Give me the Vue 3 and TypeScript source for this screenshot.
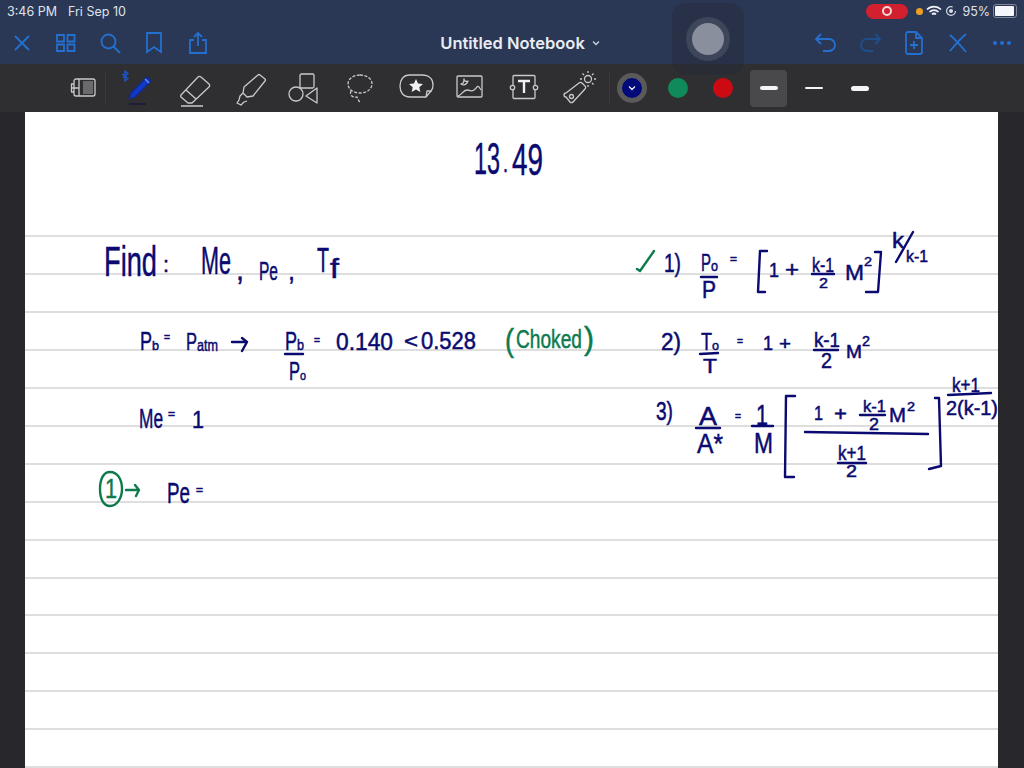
<script setup lang="ts">
interface Ink {
  t: string
  x: number
  y: number
  w: number
  s: number
  green?: boolean
}

// page handwriting, in screenshot coordinates: x, baseline, width, font size
const ink: Ink[] = [
  { t: '13', x: 474, y: 174, w: 26, s: 44 },
  { t: '.', x: 503, y: 172, w: 5, s: 26 },
  { t: '49', x: 512, y: 175, w: 31, s: 44 },
  { t: 'Find', x: 104, y: 276, w: 53, s: 42 },
  { t: ':', x: 163, y: 272, w: 6, s: 22 },
  { t: 'Me', x: 201, y: 274, w: 30, s: 38 },
  { t: ',', x: 236, y: 280, w: 8, s: 30 },
  { t: 'Pe', x: 259, y: 280, w: 19, s: 26 },
  { t: ',', x: 288, y: 280, w: 7, s: 28 },
  { t: 'T', x: 317, y: 272, w: 12, s: 36 },
  { t: 'f', x: 330, y: 278, w: 9, s: 28 },

  { t: 'P', x: 140, y: 350, w: 12, s: 26 },
  { t: 'b', x: 152, y: 350, w: 7, s: 13 },
  { t: '=', x: 164, y: 341, w: 6, s: 10 },
  { t: 'P', x: 186, y: 350, w: 11, s: 24 },
  { t: 'atm', x: 197, y: 351, w: 21, s: 17 },
  { t: 'P', x: 285, y: 350, w: 12, s: 26 },
  { t: 'b', x: 297, y: 350, w: 7, s: 15 },
  { t: 'P', x: 289, y: 380, w: 11, s: 26 },
  { t: 'o', x: 300, y: 380, w: 6, s: 13 },
  { t: '=', x: 314, y: 344, w: 6, s: 10 },
  { t: '0.140', x: 336, y: 350, w: 57, s: 24 },
  { t: '<', x: 404, y: 348, w: 14, s: 20 },
  { t: '0.528', x: 421, y: 349, w: 55, s: 23 },
  { t: '(', x: 505, y: 351, w: 9, s: 32, green: true },
  { t: 'Choked', x: 516, y: 348, w: 66, s: 26, green: true },
  { t: ')', x: 584, y: 349, w: 10, s: 32, green: true },

  { t: 'Me', x: 139, y: 428, w: 24, s: 27 },
  { t: '=', x: 168, y: 418, w: 7, s: 10 },
  { t: '1', x: 192, y: 428, w: 12, s: 24 },

  { t: '1', x: 105, y: 498, w: 12, s: 28, green: true },
  { t: 'Pe', x: 167, y: 503, w: 23, s: 30 },
  { t: '=', x: 196, y: 494, w: 7, s: 10 },

  { t: '1)', x: 664, y: 272, w: 17, s: 26 },
  { t: 'P', x: 701, y: 271, w: 10, s: 24 },
  { t: 'o', x: 711, y: 271, w: 7, s: 14 },
  { t: 'P', x: 702, y: 298, w: 14, s: 24 },
  { t: '=', x: 730, y: 263, w: 7, s: 10 },
  { t: '1', x: 769, y: 277, w: 10, s: 20 },
  { t: '+', x: 785, y: 277, w: 14, s: 22 },
  { t: 'k-1', x: 812, y: 272, w: 22, s: 20 },
  { t: '2', x: 819, y: 288, w: 9, s: 15 },
  { t: 'M', x: 845, y: 280, w: 19, s: 22 },
  { t: '2', x: 864, y: 266, w: 8, s: 13 },
  { t: 'k', x: 892, y: 248, w: 12, s: 22 },
  { t: 'k-1', x: 906, y: 262, w: 22, s: 17 },

  { t: '2)', x: 661, y: 350, w: 20, s: 24 },
  { t: 'T', x: 701, y: 350, w: 11, s: 24 },
  { t: 'o', x: 712, y: 350, w: 7, s: 13 },
  { t: 'T', x: 703, y: 373, w: 14, s: 21 },
  { t: '=', x: 737, y: 345, w: 6, s: 10 },
  { t: '1', x: 763, y: 350, w: 10, s: 20 },
  { t: '+', x: 779, y: 350, w: 12, s: 18 },
  { t: 'k-1', x: 814, y: 347, w: 26, s: 20 },
  { t: '2', x: 821, y: 368, w: 11, s: 22 },
  { t: 'M', x: 846, y: 358, w: 16, s: 18 },
  { t: '2', x: 862, y: 346, w: 8, s: 14 },

  { t: '3)', x: 656, y: 420, w: 17, s: 26 },
  { t: 'A', x: 699, y: 425, w: 18, s: 26 },
  { t: 'A*', x: 697, y: 453, w: 26, s: 28 },
  { t: '=', x: 735, y: 420, w: 6, s: 10 },
  { t: '1', x: 756, y: 425, w: 12, s: 30 },
  { t: 'M', x: 754, y: 453, w: 19, s: 30 },
  { t: '1', x: 814, y: 420, w: 9, s: 20 },
  { t: '+', x: 834, y: 421, w: 13, s: 20 },
  { t: 'k-1', x: 863, y: 412, w: 23, s: 17 },
  { t: '2', x: 869, y: 430, w: 10, s: 17 },
  { t: 'M', x: 889, y: 422, w: 17, s: 20 },
  { t: '2', x: 907, y: 411, w: 8, s: 12 },
  { t: 'k+1', x: 838, y: 460, w: 28, s: 21 },
  { t: '2', x: 846, y: 477, w: 11, s: 17 },
  { t: 'k+1', x: 952, y: 392, w: 28, s: 21 },
  { t: '2(k-1)', x: 946, y: 415, w: 52, s: 20 }
]

// fraction bars, drawn by hand in the note
const bars = [
  [285, 354, 303, 354], [701, 277, 717, 277], [812, 274, 834, 274],
  [700, 354, 718, 353], [814, 350, 838, 350], [696, 428, 720, 428],
  [752, 426, 773, 426], [860, 415, 885, 415], [805, 432, 928, 434],
  [838, 463, 866, 463], [948, 395, 991, 393]
]

const tools = ['pen', 'eraser', 'highlighter', 'shapes', 'lasso', 'sticker', 'image', 'text', 'wand']

const ctx = document.createElement('canvas').getContext('2d')!

// squeeze each token to the width it has in the note
function placeInk(item: Ink): string {
  ctx.font = `${item.s}px "Liberation Sans"`
  const sx = item.w / ctx.measureText(item.t).width
  return `translate(${item.x} ${item.y}) scale(${sx.toFixed(3)} 1)`
}
</script>

<template>
  <div class="screen">
    <header class="top">
      <div class="status">
        <div class="clock"><span>3:46 PM</span><span>Fri Sep 10</span></div>
        <div class="indicators">
          <span class="rec"><i></i></span>
          <span class="dot"></span>
          <svg class="wifi" width="16" height="12" viewBox="0 0 16 12"><path d="M1 4.500a10 10 0 0 1 14 0M3.500 7a6.500 6.500 0 0 1 9 0M6 9.400a3 3 0 0 1 4 0" fill="none" stroke="#f2f4f8" stroke-width="1.700" /></svg>
          <svg class="lock" width="12" height="12" viewBox="0 0 12 12"><circle cx="6" cy="6" r="4.400" fill="none" stroke="#d8dce4" stroke-width="1.200" stroke-dasharray="22 5" /><circle cx="6" cy="6" r="2" fill="#d8dce4" /></svg>
          <span class="pct">95%</span>
          <span class="battery"><i></i></span>
        </div>
      </div>
      <nav class="nav">
        <div class="nav-side">
          <svg width="24" height="24" viewBox="0 0 24 24"><path d="M5 5l14 14M19 5L5 19" /></svg>
          <svg width="24" height="24" viewBox="0 0 24 24"><path d="M3 4h7v6.500H3zM13.500 4h7v6.500h-7zM3 13.500h7V20H3zM13.500 13.500h7V20h-7z" /></svg>
          <svg width="24" height="24" viewBox="0 0 24 24"><circle cx="10.500" cy="10.500" r="7" /><path d="M15.500 15.500L22 22" /></svg>
          <svg width="24" height="24" viewBox="0 0 24 24"><path d="M5 2h14v19l-7-5-7 5z" /></svg>
          <svg width="24" height="24" viewBox="0 0 24 24"><path d="M8 9H4v13h16V9h-4M12 15V2M8 6l4-4 4 4" /></svg>
        </div>
        <div class="title">Untitled Notebook <svg width="8" height="6" viewBox="0 0 8 6"><path d="M1 1.500l3 3 3-3" /></svg></div>
        <div class="nav-side right">
          <svg width="24" height="24" viewBox="0 0 24 24"><path d="M7 3L2 8l5 5M2 8h13a6 6 0 0 1 6 6v0a6 6 0 0 1-6 6H9" /></svg>
          <svg class="dim" width="24" height="24" viewBox="0 0 24 24"><path d="M17 3l5 5-5 5M22 8H9a6 6 0 0 0-6 6v0a6 6 0 0 0 6 6h6" /></svg>
          <svg width="24" height="24" viewBox="0 0 24 24"><path d="M4 3a2 2 0 0 1 2-2h8l6 6v14a2 2 0 0 1-2 2H6a2 2 0 0 1-2-2zM14 1v6h6M12 10v8M8 14h8" /></svg>
          <svg width="24" height="24" viewBox="0 0 24 24"><path d="M4 4c6 5 11 11 16 17M20 3C14 8 9 14 4 20" /></svg>
          <svg width="24" height="24" viewBox="0 0 24 24"><circle cx="5" cy="12" r="2" class="fill" /><circle cx="12" cy="12" r="2" class="fill" /><circle cx="19" cy="12" r="2" class="fill" /></svg>
        </div>
      </nav>
    </header>

    <div class="toolbar">
      <svg class="split" width="26" height="22" viewBox="0 0 26 22">
        <rect x="4" y="2" width="21" height="17" rx="2" />
        <path d="M13 4l10 0 0 13-10 0z" class="hatch" />
        <path d="M4 7H1.500v8H4M1.500 11H9M9 2v17" />
      </svg>
      <span class="divider"></span>
      <div v-for="tool in tools" :key="tool" class="tool" :class="tool">
        <svg v-if="tool === 'pen'" width="46" height="40" viewBox="0 0 46 40">
          <path d="M10 8l3 2.500-3 2.500V3l3 2.500-5 4M10 8l-3-2" class="bt" />
          <path d="M14 31l2-6 16-16 4 4-16 16z" class="pen" />
          <path d="M30 11l4 4" class="pen-tip" />
          <path d="M14 36h17" class="pen-line" />
        </svg>
        <svg v-else-if="tool === 'eraser'" width="46" height="40" viewBox="0 0 46 40">
          <path d="M10 27l17-18a2 2 0 0 1 3 0l8 7a2 2 0 0 1 0 3L21 35h-4l-7-6a1.500 1.500 0 0 1 0-2zM15 22l10 9M10 38h22" />
        </svg>
        <svg v-else-if="tool === 'highlighter'" width="46" height="40" viewBox="0 0 46 40">
          <path d="M20 19l14-12a1.500 1.500 0 0 1 2 0l5 4a1.500 1.500 0 0 1 0 2L29 28l-6 1-4-4zM19 25l-3 3-1 4-2 3 4 2 3-3 3-1" />
        </svg>
        <svg v-else-if="tool === 'shapes'" width="46" height="40" viewBox="0 0 46 40">
          <rect x="20" y="6" width="14" height="14" rx="1.500" />
          <circle cx="16" cy="26" r="7" />
          <path d="M37 20v15l-11-7z" />
        </svg>
        <svg v-else-if="tool === 'lasso'" width="46" height="40" viewBox="0 0 46 40">
          <path d="M23 7c7 0 12 4 12 9s-5 9-12 9-12-4-12-9 5-9 12-9zM14 23c-2 4 2 7 6 6l3 6" stroke-dasharray="3 1.500" />
        </svg>
        <svg v-else-if="tool === 'sticker'" width="46" height="40" viewBox="0 0 46 40">
          <path d="M17 7h12c7 0 11 4 11 10 0 3-1 5-2 6l-5 6H17C10 29 7 24 7 18S10 7 17 7zM33 29l1-6h5" />
          <path d="M23 11l2 4.500 5 .500-3.700 3.200 1 4.800-4.300-2.500-4.300 2.500 1-4.800L16 16l5-.500z" class="fill" />
        </svg>
        <svg v-else-if="tool === 'image'" width="46" height="40" viewBox="0 0 46 40">
          <rect x="10" y="8" width="25" height="21" rx="1" />
          <path d="M11 28c4-1 5-6 9-6s4 2 7 0 3-5 5-3l2 3M17 11c0 3-1 5-3 5 3 2 6 0 7-3-2 1-4 0-4-2z" />
        </svg>
        <svg v-else-if="tool === 'text'" width="46" height="40" viewBox="0 0 46 40">
          <path d="M12 17V8.500a1 1 0 0 1 1-1h20a1 1 0 0 1 1 1V17M12 22v7.500a1 1 0 0 0 1 1h20a1 1 0 0 0 1-1V22" />
          <circle cx="11.500" cy="19.500" r="2.200" /><circle cx="34.500" cy="19.500" r="2.200" />
          <path d="M17 13h12M23 13v12" class="bold" />
        </svg>
        <svg v-else width="46" height="40" viewBox="0 0 46 40">
          <path d="M10 25l13-10a2 2 0 0 1 3 0l3 3a2 2 0 0 1 0 3L17 34a2 2 0 0 1-3 0l-4-5a2 2 0 0 1 0-4z" />
          <circle cx="15.500" cy="28.500" r="2" />
          <circle cx="32" cy="11" r="3.500" />
          <path d="M32 3v2M32 17v2M24 11h2M38 11h2M26.500 5.500l1.500 1.500M36 15l1.500 1.500M37.500 5.500L36 7" />
        </svg>
      </div>
      <span class="divider second"></span>
      <div class="swatch current"><span class="chip blue"><svg width="8" height="6" viewBox="0 0 8 6"><path d="M1 1.500l3 3 3-3" /></svg></span></div>
      <div class="swatch"><span class="chip green"></span></div>
      <div class="swatch"><span class="chip red"></span></div>
      <div class="stroke active"><i class="mid"></i></div>
      <div class="stroke"><i class="thin"></i></div>
      <div class="stroke"><i class="thick"></i></div>
    </div>

    <main class="desk">
      <section class="page">
        <svg class="ink" width="973" height="656" viewBox="25 112 973 656">
          <text
            v-for="(item, i) in ink"
            :key="i"
            :transform="placeInk(item)"
            :font-size="item.s"
            :class="{ green: item.green }"
          >{{ item.t }}</text>
          <line v-for="(b, i) in bars" :key="'b' + i" :x1="b[0]" :y1="b[1]" :x2="b[2]" :y2="b[3]" class="stroke-ink" />
          <!-- arrow, brackets, slash -->
          <path class="stroke-ink" d="M232 342h15l-5 9M242 338l5 4" />
          <path class="stroke-ink" d="M767 251h-7l-2 41h7M866 292h12l3-40h-6" />
          <path class="stroke-ink" d="M896 262l17-30" />
          <path class="stroke-ink" d="M795 396h-9l-1 81h9M935 398h4l2 68-12 3" />
          <path class="stroke-green" d="M637 269l3 2 14-20" />
          <path class="stroke-green" d="M110 472c-7 0-10 8-10 17s3 17 10 17 12-8 12-17-4-17-12-17zM126 490h13l-3 6M135 485l4 5" />
        </svg>
      </section>
    </main>

    <div class="assistive"><span class="ring"><i></i></span></div>
  </div>
</template>

<style scoped>
.screen {
  position: relative;
  width: 1024px;
  height: 768px;
  overflow: hidden;
  display: flex;
  flex-direction: column;
  background: #28282c;
  font-family: "Inter", "Liberation Sans", sans-serif;
}

.top {
  background: #2a3856;
}

.status {
  height: 22px;
  padding: 0 7px 0 7px;
  display: flex;
  align-items: center;
  justify-content: space-between;
  color: #dfe3ea;
  font-size: 12.500px;
}

.clock {
  display: flex;
  gap: 11px;
}

.indicators {
  display: flex;
  align-items: center;
}

.rec {
  width: 42px;
  height: 15px;
  margin-right: 8px;
  border-radius: 8px;
  background: #d2202f;
  display: flex;
  align-items: center;
  justify-content: center;
}

.rec i {
  width: 6px;
  height: 6px;
  border-radius: 50%;
  background: #d2202f;
  border: 2.500px solid #f6d9dc;
}

.dot {
  width: 7px;
  height: 7px;
  margin-right: 3px;
  border-radius: 50%;
  background: #f0a020;
}

.wifi {
  margin-right: 3px;
}

.lock {
  margin-right: 5px;
}

.battery {
  width: 20px;
  height: 10px;
  margin-left: 3px;
  padding: 1px;
  border: 1px solid #7f8797;
  border-radius: 3px;
  display: block;
}

.battery i {
  display: block;
  width: 95%;
  height: 100%;
  border-radius: 1px;
  background: #f4f6fa;
}

.nav {
  height: 42px;
  padding: 0 10px;
  display: flex;
  align-items: center;
}

.nav-side {
  flex: 1;
  display: flex;
  gap: 20px;
}

.nav-side.right {
  justify-content: flex-end;
}

.nav-side svg path,
.nav-side svg circle {
  fill: none;
  stroke: #2470d0;
  stroke-width: 1.800;
}

.nav-side svg .fill {
  fill: #2470d0;
  stroke: none;
}

.nav-side svg.dim path {
  stroke: #1f4e8c;
}

.title {
  color: #e9ecf2;
  font-size: 16.500px;
  font-weight: 600;
  white-space: nowrap;
  display: flex;
  align-items: center;
  gap: 7px;
  margin-left: 16px;
}

.title svg path {
  fill: none;
  stroke: #d0d5de;
  stroke-width: 1.300;
}

.toolbar {
  height: 48px;
  padding-left: 70px;
  display: flex;
  align-items: center;
  background: #2f2f31;
}

.toolbar svg path,
.toolbar svg circle,
.toolbar svg rect {
  fill: none;
  stroke: #c9c9cb;
  stroke-width: 1.300;
  stroke-linejoin: round;
}

.split {
  margin-right: 9px;
}

.toolbar svg .hatch {
  fill: #6a6a6c;
  stroke: none;
}

.divider {
  width: 1px;
  height: 34px;
  background: #3a3a3c;
}

.divider.second {
  margin-left: 2px;
}

.tool {
  width: 54.500px;
  display: flex;
  justify-content: center;
}

.tool.pen {
  margin-left: 5px;
}

.tool.eraser {
  margin-left: 1px;
}

.tool.highlighter {
  margin-left: -1px;
}

.tool.shapes {
  margin-left: 1px;
}

.tool.lasso {
  margin-left: 3px;
}

.tool.sticker {
  margin-left: 1px;
}

.tool.text {
  margin-left: -1px;
}

.tool.wand {
  margin-left: 1px;
}

.toolbar svg .bt {
  stroke: #1a55c8;
  stroke-width: 1.500;
}

.toolbar svg .pen {
  fill: #1238c8;
  stroke: #0e2a96;
}

.toolbar svg .pen-tip {
  stroke: #6f8fe0;
}

.toolbar svg .pen-line {
  stroke: #1a1a3c;
  stroke-width: 1.500;
}

.toolbar svg .fill {
  fill: #f0f0f0;
  stroke: none;
}

.toolbar svg .bold {
  stroke: #f0f0f0;
  stroke-width: 2.400;
}

.swatch {
  width: 45.500px;
  display: flex;
  justify-content: center;
}

.chip {
  width: 20px;
  height: 20px;
  border-radius: 50%;
  display: flex;
  align-items: center;
  justify-content: center;
}

.current .chip {
  box-shadow: 0 0 0 5px #5a5a5b;
}

.chip.blue {
  background: #000a78;
}

.chip svg path {
  stroke: #e8e8f4;
}

.chip.green {
  background: #0f8a58;
}

.chip.red {
  background: #cc0a14;
}

.stroke {
  width: 37px;
  height: 37px;
  margin: 0 4.250px;
  display: flex;
  align-items: center;
  justify-content: center;
  border-radius: 4px;
}

.stroke.active {
  background: #49494b;
}

.stroke i {
  display: block;
  width: 18px;
  background: #f4f4f4;
  border-radius: 3px;
}

.stroke .mid {
  height: 4px;
}

.stroke .thin {
  height: 2px;
}

.stroke .thick {
  height: 5px;
}

.desk {
  flex: 1;
  padding: 0 26px 0 25px;
}

.page {
  height: 100%;
  background-color: #fff;
  background-image: repeating-linear-gradient(to bottom, #dedede 0, #dedede 2px, transparent 2px, transparent 37.950px);
  background-position: 0 123px;
  background-size: 100% 100%;
  background-repeat: no-repeat;
}

.ink {
  display: block;
}

.ink text {
  font-family: "Liberation Sans", sans-serif;
  fill: #0a0a70;
  stroke: #0a0a70;
  stroke-width: 0.500;
}

.ink text.green {
  fill: #0e7a4e;
  stroke: #0e7a4e;
}

.stroke-ink,
.stroke-green {
  fill: none;
  stroke-width: 2.400;
  stroke-linecap: round;
  stroke-linejoin: round;
}

.stroke-ink {
  stroke: #0a0a70;
}

.stroke-green {
  stroke: #0e7a4e;
}

.assistive {
  position: absolute;
  left: 672px;
  top: 3px;
  width: 72px;
  height: 72px;
  border-radius: 14px;
  background: rgba(38, 42, 56, 0.45);
  display: flex;
  align-items: center;
  justify-content: center;
}

.ring {
  width: 44px;
  height: 44px;
  border-radius: 50%;
  background: rgba(150, 155, 170, 0.2);
  display: flex;
  align-items: center;
  justify-content: center;
}

.ring i {
  display: block;
  width: 32px;
  height: 32px;
  border-radius: 50%;
  background: #8a8f9e;
}
</style>

<style>
html,
body {
  margin: 0;
  background: #28282c;
}
</style>
